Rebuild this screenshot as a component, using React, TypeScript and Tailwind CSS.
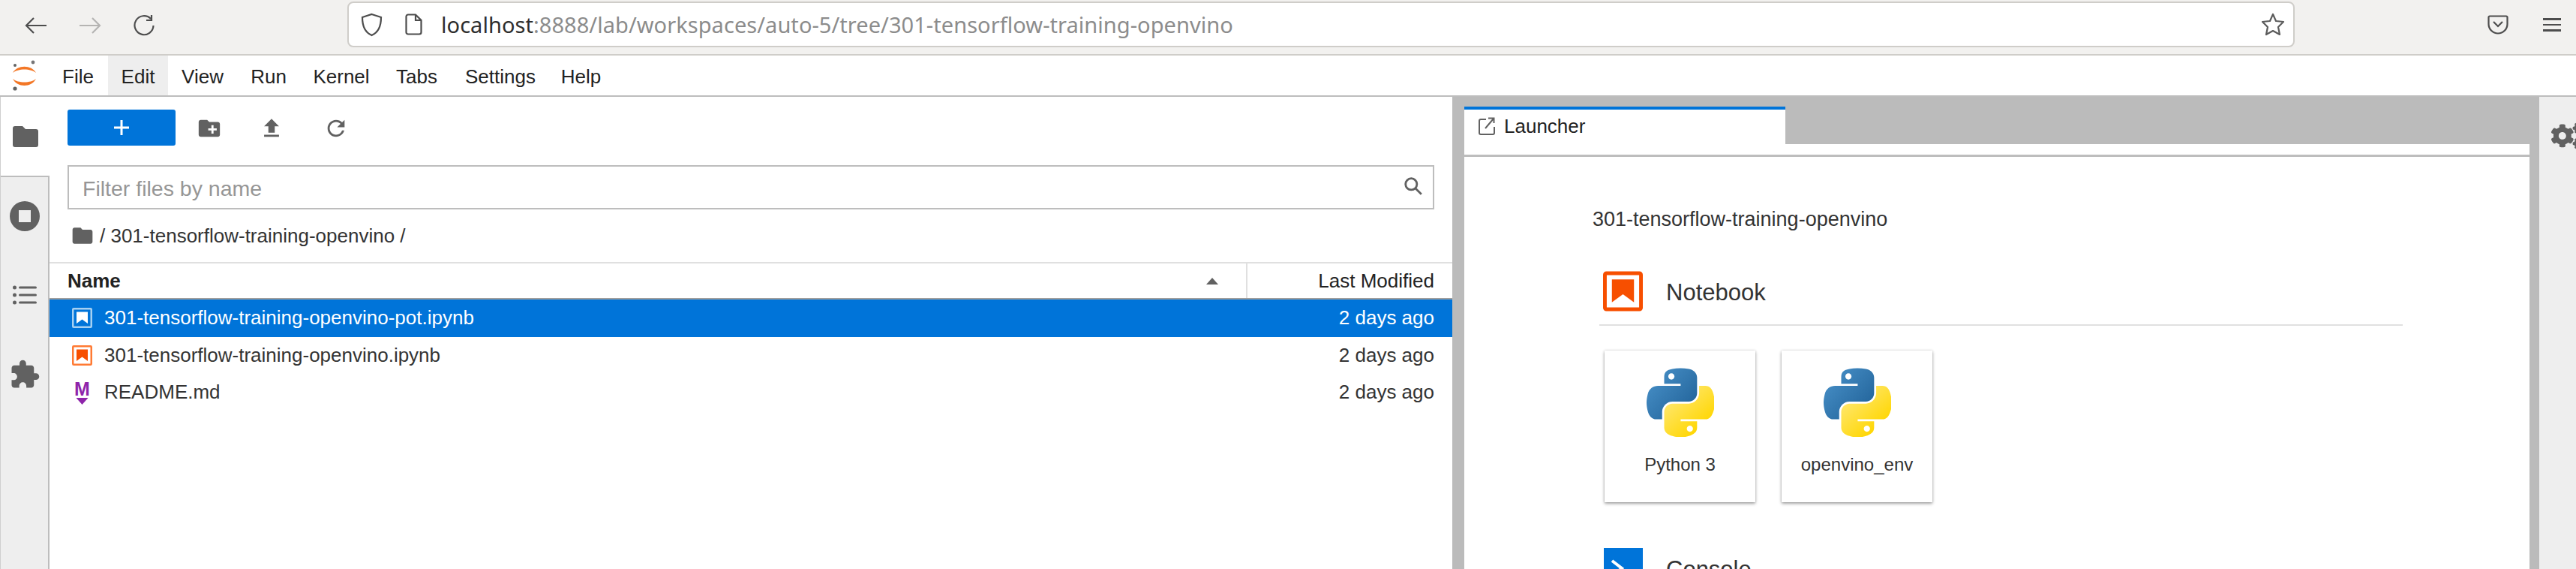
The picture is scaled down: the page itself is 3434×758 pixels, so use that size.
import React from "react";
import { MdCreateNewFolder, MdExtension, MdFileUpload, MdFolder, MdRefresh } from "react-icons/md";
import { FaCogs } from "react-icons/fa";

const arial = "font-['Liberation_Sans',Arial,sans-serif]";

const JupyterLogo = () => (
  <svg viewBox="0 0 35 42" className="w-[35px] h-[42px]">
    <path d="M2 17 C8 6 27 6 33 17 C26 11 9 11 2 17 Z" fill="#f37726" />
    <path d="M2 25 C9 31 26 31 33 25 C27 37 8 37 2 25 Z" fill="#f37726" />
    <circle cx="29" cy="3" r="2.4" fill="#767677" />
    <circle cx="5" cy="7" r="2" fill="#616262" />
    <circle cx="5" cy="38" r="2.6" fill="#616262" />
  </svg>
);

const NotebookIcon = ({ frame, fill, className }: { frame: string; fill: string; className: string }) => (
  <svg viewBox="0 0 27 27" className={className}>
    <rect x="1.25" y="1.25" width="24.5" height="24.5" rx="1" fill="none" stroke={frame} strokeWidth="2.5" />
    <path d="M6 5.5 H21 V21 L13.5 15.5 L6 21 Z" fill={fill} />
  </svg>
);

const PythonLogo = () => (
  <svg viewBox="0 0 110 111" className="w-[90px] h-[92px]">
    <defs>
      <linearGradient id="pyBlue" x1="0" y1="0" x2="1" y2="0.9">
        <stop offset="0" stopColor="#4b94cc" />
        <stop offset="1" stopColor="#1f6096" />
      </linearGradient>
      <linearGradient id="pyYellow" x1="0.8" y1="0.8" x2="0.2" y2="0.1">
        <stop offset="0" stopColor="#ffd600" />
        <stop offset="1" stopColor="#ffe873" />
      </linearGradient>
    </defs>
    <path
      fill="url(#pyBlue)"
      d="M54.918 0.001 C50.335 0.022 45.958 0.413 42.106 1.095 C30.76 3.099 28.7 7.295 28.7 15.032 V25.251 H55.512 V28.657 H18.637 C10.845 28.657 4.022 33.341 1.887 42.25 C-0.574 52.46 -0.684 58.85 1.887 69.5 C3.793 77.4 8.344 83.1 16.136 83.1 H25.355 V70.85 C25.355 62 33.012 54.193 42.106 54.193 H68.887 C76.341 54.193 82.293 48.055 82.293 40.568 V15.03 C82.293 7.764 76.163 2.305 68.887 1.093 C64.281 0.328 59.502 -0.02 54.918 0.001 Z M40.418 8.22 C43.188 8.22 45.449 10.518 45.449 13.345 C45.449 16.161 43.187 18.439 40.418 18.439 C37.638 18.439 35.386 16.161 35.386 13.345 C35.386 10.518 37.638 8.22 40.418 8.22 Z"
    />
    <path
      fill="url(#pyYellow)"
      d="M85.637 28.657 V40.563 C85.637 49.794 77.811 57.563 68.887 57.563 H42.106 C34.77 57.563 28.7 63.841 28.7 71.188 V96.72 C28.7 103.986 35.019 108.26 42.106 110.345 C50.593 112.841 58.732 113.292 68.887 110.345 C75.637 108.391 82.293 104.457 82.293 96.72 V86.5 H55.512 V83.094 H95.7 C103.493 83.094 106.396 77.658 109.106 69.5 C111.905 61.101 111.786 53.024 109.106 42.25 C107.18 34.493 103.502 28.657 95.7 28.657 Z M70.575 93.313 C73.355 93.313 75.606 95.591 75.606 98.407 C75.606 101.234 73.354 103.532 70.575 103.532 C67.805 103.532 65.543 101.234 65.543 98.407 C65.543 95.591 67.805 93.313 70.575 93.313 Z"
    />
  </svg>
);

const KernelCard = ({ label }: { label: string }) => (
  <div className="w-[201px] h-[202px] bg-white shadow-[0_2px_4px_rgba(0,0,0,0.35),0_0_3px_rgba(0,0,0,0.15)] flex flex-col items-center pt-[23px]">
    <PythonLogo />
    <div className="mt-[23px] text-[24px] leading-[28px] text-[#333]">{label}</div>
  </div>
);

const FileRow = ({ icon, name, selected }: { icon: React.ReactNode; name: string; selected?: boolean }) => (
  <div className={`h-[49.5px] flex items-center pl-[30px] pr-[24px] text-[26px] ${selected ? "bg-[#0074d9] text-white" : "text-[#333]"}`}>
    <div className="w-[27px] h-[27px] flex items-center justify-center">{icon}</div>
    <span className="ml-[16px] flex-1">{name}</span>
    <span>2 days ago</span>
  </div>
);

const menus = [
  { label: "File", w: "w-[80px]", hover: false },
  { label: "Edit", w: "w-[80px]", hover: true },
  { label: "View", w: "w-[92px]", hover: false },
  { label: "Run", w: "w-[84px]", hover: false },
  { label: "Kernel", w: "w-[110px]", hover: false },
  { label: "Tabs", w: "w-[91px]", hover: false },
  { label: "Settings", w: "w-[132px]", hover: false },
  { label: "Help", w: "w-[83px]", hover: false },
];

export default function App() {
  return (
    <div className={`w-[3434px] h-[758px] overflow-hidden flex flex-col bg-white ${arial}`}>
      {/* firefox toolbar */}
      <div className="h-[74px] shrink-0 bg-[#f2f1ef] border-b-2 border-[#cfcdc9] flex items-start">
        <div className="flex items-center h-[68px] pl-[33px] w-[463px]">
          <svg viewBox="0 0 30 24" className="w-[30px] h-[24px]" fill="none" stroke="#4d4d4d" strokeWidth="2.2">
            <path d="M29 12 H2 M12 2 L2 12 L12 22" />
          </svg>
          <svg viewBox="0 0 30 24" className="w-[30px] h-[24px] ml-[42px]" fill="none" stroke="#b5b4b2" strokeWidth="2.2">
            <path d="M1 12 H28 M18 2 L28 12 L18 22" />
          </svg>
          <svg viewBox="0 0 30 30" className="w-[30px] h-[30px] ml-[42px]" fill="none" stroke="#4d4d4d" strokeWidth="2.2">
            <path d="M24 6 A12.5 12.5 0 1 0 27.5 15" />
            <path d="M25 1 V8 H18" />
          </svg>
        </div>
        <div className="w-[2596px] h-[61px] mt-[2px] bg-white border-2 border-[#cfcdc9] rounded-[8px] flex items-center pl-[16px] pr-[11px]">
          <svg viewBox="0 0 29 32" className="w-[29px] h-[32px]" fill="none" stroke="#4d4d4d" strokeWidth="2.2">
            <path d="M14.5 2 L27 6 C27 18 24 26 14.5 30 C5 26 2 18 2 6 Z" />
          </svg>
          <svg viewBox="0 0 23 29" className="w-[23px] h-[29px] ml-[30px]" fill="none" stroke="#4d4d4d" strokeWidth="2.2">
            <path d="M4 1.5 H14 L21.5 9 V25 A2.5 2.5 0 0 1 19 27.5 H4 A2.5 2.5 0 0 1 1.5 25 V4 A2.5 2.5 0 0 1 4 1.5 Z M14 1.5 V9 H21.5" />
          </svg>
          <div className="ml-[25px] flex-1 font-['Noto_Sans',sans-serif] text-[29px] tracking-[0.05px] text-[#8c8c8c] whitespace-nowrap">
            <span className="text-[#2e2e2e]">localhost</span>:8888/lab/workspaces/auto-5/tree/301-tensorflow-training-openvino
          </div>
          <svg viewBox="0 0 32 31" className="w-[32px] h-[31px]" fill="none" stroke="#5a5a5a" strokeWidth="2.2" strokeLinejoin="round">
            <path d="M16 2 L20 11 L30 12 L23 19 L25 29 L16 24 L7 29 L9 19 L2 12 L12 11 Z" />
          </svg>
        </div>
        <div className="flex items-center h-[66px] pl-[257px]">
          <svg viewBox="0 0 28 26" className="w-[28px] h-[26px]" fill="none" stroke="#4d4d4d" strokeWidth="2.2">
            <path d="M3 1.5 H25 A1.5 1.5 0 0 1 26.5 3 V12 A12.5 12.5 0 0 1 1.5 12 V3 A1.5 1.5 0 0 1 3 1.5 Z" />
            <path d="M8 9 L14 15 L20 9" />
          </svg>
          <div className="ml-[46px] w-[24px] flex flex-col gap-[5px]">
            <div className="h-[2.5px] bg-[#4d4d4d]" />
            <div className="h-[2.5px] bg-[#4d4d4d]" />
            <div className="h-[2.5px] bg-[#4d4d4d]" />
          </div>
        </div>
      </div>

      {/* jupyter menu */}
      <div className="h-[55px] shrink-0 border-b-2 border-[#bdbdbd] flex items-stretch">
        <div className="w-[64px] pl-[15px] pt-[6px]">
          <JupyterLogo />
        </div>
        {menus.map((m) => (
          <div key={m.label} className={`${m.w} flex items-center justify-center pt-[3px] text-[26px] text-[#222] ${m.hover ? "bg-[#eeeeee]" : ""}`}>
            {m.label}
          </div>
        ))}
      </div>

      <div className="flex-1 flex min-h-0">
        {/* left rail */}
        <div className="w-[66px] shrink-0 flex flex-col border-l border-[#cfcfcf]">
          <div className="h-[105px] bg-white flex items-end justify-center pb-[38px] text-[#616161]">
            <svg viewBox="0 0 34 28" className="w-[34px] h-[28px]" fill="#616161">
              <path d="M3 0 H13 L17 4 H31 A3 3 0 0 1 34 7 V25 A3 3 0 0 1 31 28 H3 A3 3 0 0 1 0 25 V3 A3 3 0 0 1 3 0 Z" />
            </svg>
          </div>
          <div className="flex-1 bg-[#eeeeee] border-t-2 border-r-2 border-[#bdbdbd] flex flex-col items-center">
            <svg viewBox="0 0 40 40" className="w-[40px] h-[40px] mt-[32px]" fill="#616161" fillRule="evenodd">
              <path d="M20 0 A20 20 0 1 0 20 40 A20 20 0 1 0 20 0 Z M12 12 H28 V28 H12 Z" />
            </svg>
            <svg viewBox="0 0 32 26" className="w-[32px] h-[26px] mt-[72px]" fill="#616161">
              <circle cx="2.5" cy="3" r="2.5" />
              <circle cx="2.5" cy="13" r="2.5" />
              <circle cx="2.5" cy="23" r="2.5" />
              <rect x="8" y="1.5" width="24" height="3" rx="1.5" />
              <rect x="8" y="11.5" width="24" height="3" rx="1.5" />
              <rect x="8" y="21.5" width="24" height="3" rx="1.5" />
            </svg>
            <MdExtension className="w-[42px] h-[42px] mt-[72px] text-[#616161]" />
          </div>
        </div>

        {/* file browser */}
        <div className="w-[1870px] shrink-0 flex flex-col bg-white">
          <div className="h-[91px] shrink-0 flex items-start pl-[24px] pt-[17px]">
            <div className="w-[144px] h-[48px] rounded-[3px] bg-[#0074d9] flex items-center justify-center">
              <svg viewBox="0 0 20 20" className="w-[20px] h-[20px]" fill="#fff">
                <path d="M8.5 0 H11.5 V8.5 H20 V11.5 H11.5 V20 H8.5 V11.5 H0 V8.5 H8.5 Z" />
              </svg>
            </div>
            <MdCreateNewFolder className="w-[34px] h-[34px] ml-[28px] mt-[8px] text-[#616161]" />
            <MdFileUpload className="w-[34px] h-[34px] ml-[49px] mt-[8px] text-[#616161]" />
            <MdRefresh className="w-[34px] h-[34px] ml-[52px] mt-[8px] text-[#616161]" />
          </div>
          <div className="mx-[24px] h-[59px] shrink-0 border-2 border-[#bdbdbd] flex items-center pl-[18px] pr-[13px] text-[28.5px] text-[#969696]">
            <span className="flex-1 pt-[3px]">Filter files by name</span>
            <svg viewBox="0 0 24 24" className="w-[26px] h-[26px] mb-[3px]" fill="none" stroke="#616161" strokeWidth="2.6">
              <circle cx="9.5" cy="9.5" r="7" />
              <path d="M14.5 14.5 L22 22" />
            </svg>
          </div>
          <div className="h-[70px] shrink-0 flex items-center pl-[28px] text-[26px] text-[#333]">
            <MdFolder className="w-[32px] h-[32px] text-[#616161]" />
            <span className="ml-[7px]">/ 301-tensorflow-training-openvino /</span>
          </div>
          <div className="h-[50px] shrink-0 border-t-2 border-b-2 border-t-[#e0e0e0] border-b-[#9e9e9e] flex text-[26px] text-[#222]">
            <div className="w-[1597px] flex items-center pl-[24px] pr-[37px] border-r-2 border-[#e0e0e0]">
              <span className="flex-1 font-bold">Name</span>
              <svg viewBox="0 0 16 9" className="w-[16px] h-[9px]" fill="#616161">
                <path d="M8 0 L16 9 H0 Z" />
              </svg>
            </div>
            <div className="flex-1 flex items-center justify-end pr-[24px]">Last Modified</div>
          </div>
          <FileRow
            selected
            name="301-tensorflow-training-openvino-pot.ipynb"
            icon={<NotebookIcon frame="#a6d0f2" fill="#ffffff" className="w-[27px] h-[27px]" />}
          />
          <FileRow
            name="301-tensorflow-training-openvino.ipynb"
            icon={<NotebookIcon frame="#ff7a33" fill="#f74f00" className="w-[27px] h-[27px]" />}
          />
          <FileRow
            name="README.md"
            icon={
              <div className="flex flex-col items-center text-[#8e24aa]">
                <span className="font-bold text-[25px] leading-[23px]">M</span>
                <svg viewBox="0 0 16 9" className="w-[17px] h-[9px] shrink-0" fill="#8e24aa">
                  <path d="M0 0 H16 L8 9 Z" />
                </svg>
              </div>
            }
          />
        </div>

        {/* splitter */}
        <div className="w-[16px] shrink-0 bg-[#bbbbbb]" />

        {/* launcher */}
        <div className="w-[1433px] shrink-0 flex flex-col bg-[#bbbbbb]">
          <div className="h-[63px] shrink-0 flex items-end">
            <div className="w-[428px] h-[50px] bg-white border-t-4 border-[#0074d9] flex items-center pl-[19px] pb-[2px]">
              <svg viewBox="0 0 22 24" className="w-[22px] h-[24px]" fill="none" stroke="#616161" strokeWidth="2">
                <path d="M10 3 H3 A2 2 0 0 0 1 5 V21 A2 2 0 0 0 3 23 H19 A2 2 0 0 0 21 21 V13" />
                <path d="M9 15 L20 2 M13 1.5 H20.5 V8" />
              </svg>
              <span className="ml-[12px] text-[26px] text-[#222]">Launcher</span>
            </div>
          </div>
          <div className="flex-1 mr-[13px] bg-white flex flex-col min-h-0">
            <div className="h-[17px] shrink-0 border-b-[3px] border-[#bdbdbd]" />
            <div className="pl-[171px] flex flex-col">
              <div className="mt-[66px] h-[34px] leading-[34px] text-[27px] text-[#333]">301-tensorflow-training-openvino</div>
              <div className="mt-[52px] ml-[9px] w-[1071px] h-[73px] border-b-2 border-[#e0e0e0] pl-[5px] flex items-start">
                <NotebookIcon frame="#f74f00" fill="#f74f00" className="w-[53px] h-[54px]" />
                <span className="ml-[31px] text-[31px] leading-[58px] text-[#333]">Notebook</span>
              </div>
              <div className="mt-[33px] ml-[16px] flex gap-[35px]">
                <KernelCard label="Python 3" />
                <KernelCard label="openvino_env" />
              </div>
              <div className="mt-[61px] ml-[15px] flex items-start">
                <div className="w-[52px] h-[52px] bg-[#0074d9] flex items-center justify-center">
                  <svg viewBox="0 0 52 52" className="w-[52px] h-[52px]" fill="none" stroke="#fff" strokeWidth="4">
                    <path d="M11 17 L24 27 L11 37 M26 39 H42" />
                  </svg>
                </div>
                <span className="ml-[31px] text-[31px] leading-[58px] text-[#333]">Console</span>
              </div>
            </div>
          </div>
        </div>

        {/* right rail */}
        <div className="flex-1 bg-[#eeeeee] pl-[16px] pt-[34px] overflow-hidden">
          <FaCogs className="w-[44px] h-[36px] text-[#616161] max-w-none" />
        </div>
      </div>
    </div>
  );
}
